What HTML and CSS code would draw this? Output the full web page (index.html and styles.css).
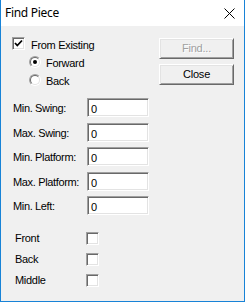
FILE: index.html
```html
<!DOCTYPE html>
<html>
<head>
<meta charset="utf-8">
<link rel="stylesheet" href="styles.css">
</head>
<body>
<div class="window">
  <div class="titlebar">
    <span class="title">Find Piece</span>
    <svg class="close" width="11" height="11" viewBox="0 0 11 11"><path d="M0.5 0.5 L10.5 10.5 M10.5 0.5 L0.5 10.5" stroke="#000" stroke-width="1" fill="none"/></svg>
  </div>
  <div class="content">
    <div class="main">
      <div class="options">
        <div class="opt-row">
          <span class="check"><svg width="9" height="9" viewBox="0 0 9 9"><path d="M1 4 L3.3 6.5 L8 1.5" stroke="#000" stroke-width="1.8" fill="none"/></svg></span>
          <span class="opt-label">From Existing</span>
        </div>
        <div class="opt-row radio-row">
          <span class="radio"><span class="radio-in"><span class="dot"></span></span></span>
          <span class="opt-label">Forward</span>
        </div>
        <div class="opt-row radio-row">
          <span class="radio"><span class="radio-in"></span></span>
          <span class="opt-label">Back</span>
        </div>
      </div>
      <div class="buttons">
        <div class="btn disabled">Find...</div>
        <div class="btn">Close</div>
      </div>
    </div>
    <div class="fields">
      <div class="field-row"><span class="field-label">Min. Swing:</span><span class="input">0</span></div>
      <div class="field-row"><span class="field-label">Max. Swing:</span><span class="input">0</span></div>
      <div class="field-row"><span class="field-label">Min. Platform:</span><span class="input">0</span></div>
      <div class="field-row"><span class="field-label">Max. Platform:</span><span class="input">0</span></div>
      <div class="field-row"><span class="field-label">Min. Left:</span><span class="input">0</span></div>
    </div>
    <div class="flags">
      <div class="flag-row"><span class="flag-label">Front</span><span class="check"></span></div>
      <div class="flag-row"><span class="flag-label">Back</span><span class="check"></span></div>
      <div class="flag-row"><span class="flag-label">Middle</span><span class="check"></span></div>
    </div>
  </div>
</div>
</body>
</html>
```
FILE: styles.css
```css
* { box-sizing: border-box; }
html, body { margin: 0; padding: 0; background: #f0f0f0; }
body {
  font-family: "Liberation Sans", Arial, sans-serif;
  font-size: 11px;
  color: #000;
}
.window {
  width: 245px;
  height: 302px;
  border-left: 1px solid #1883d7;
  border-right: 1px solid #1883d7;
  border-bottom: 1px solid #1883d7;
  background: #f0f0f0;
  overflow: hidden;
}
.titlebar {
  height: 26px;
  background: #fff;
  display: flex;
  align-items: flex-start;
  justify-content: space-between;
}
.title {
  font-family: "Noto Sans", "Open Sans", sans-serif;
  font-size: 12px;
  letter-spacing: -0.3px;
  line-height: 16px;
  padding: 5px 0 0 4px;
}
.close { margin: 8px 9px 0 0; }
.content { padding: 0 0 0 11px; }
.main { display: flex; align-items: flex-start; }
.options { display: flex; flex-direction: column; padding-top: 9px; }
.opt-row { display: flex; align-items: flex-start; height: 18px; }
.opt-label { line-height: 18px; padding-top: 1px; letter-spacing: -0.3px; }
.check {
  width: 13px; height: 13px;
  margin-top: 2px;
  border-top: 1px solid #a0a0a0;
  border-left: 1px solid #a0a0a0;
  border-right: 1px solid #fff;
  border-bottom: 1px solid #fff;
  box-shadow: inset 1px 1px 0 #696969, inset -1px -1px 0 #e3e3e3;
  background: #fff;
  display: flex; align-items: center; justify-content: center;
  flex: none;
}
.opt-row .check { margin-right: 6px; }
.radio-row { padding-left: 17px; }
.radio {
  width: 12px; height: 12px;
  margin-top: 3px;
  margin-right: 5px;
  border-radius: 50%;
  border: 1px solid;
  border-color: #a0a0a0 #fff #fff #a0a0a0;
  flex: none;
  display: flex;
}
.radio-in {
  flex: 1;
  border-radius: 50%;
  border: 1px solid;
  border-color: #696969 #e3e3e3 #e3e3e3 #696969;
  background: #fff;
  display: flex; align-items: center; justify-content: center;
}
.dot { width: 4px; height: 4px; border-radius: 50%; background: #000; }
.buttons {
  margin-left: auto;
  margin-right: 10px;
  padding-top: 12px;
  display: flex; flex-direction: column; gap: 5px;
}
.btn {
  width: 75px; height: 21px;
  border-top: 1px solid #fff;
  border-left: 1px solid #fff;
  border-right: 1px solid #696969;
  border-bottom: 1px solid #696969;
  box-shadow: inset 1px 1px 0 #e3e3e3, inset -1px -1px 0 #a0a0a0;
  background: #f0f0f0;
  text-align: center;
  line-height: 19px;
  letter-spacing: -0.2px;
}
.btn.disabled { color: #a0a0a0; text-shadow: 1px 1px 0 #fff; }
.fields { display: flex; flex-direction: column; gap: 5.5px; margin-top: 9px; }
.field-row { display: flex; align-items: center; height: 19px; }
.field-label { width: 75px; padding-left: 1px; letter-spacing: -0.35px; padding-top: 1px; }
.input {
  width: 62px; height: 19px;
  border-top: 1px solid #a0a0a0;
  border-left: 1px solid #a0a0a0;
  border-right: 1px solid #fff;
  border-bottom: 1px solid #fff;
  box-shadow: inset 1px 1px 0 #696969, inset -1px -1px 0 #e3e3e3;
  background: #fff;
  padding-left: 3px;
  line-height: 18px;
  padding-top: 1px;
}
.flags { display: flex; flex-direction: column; margin-top: 15px; }
.flag-row { display: flex; align-items: flex-start; height: 21px; }
.flag-label { width: 74px; padding-left: 3px; line-height: 17px; letter-spacing: -0.3px; }
```
